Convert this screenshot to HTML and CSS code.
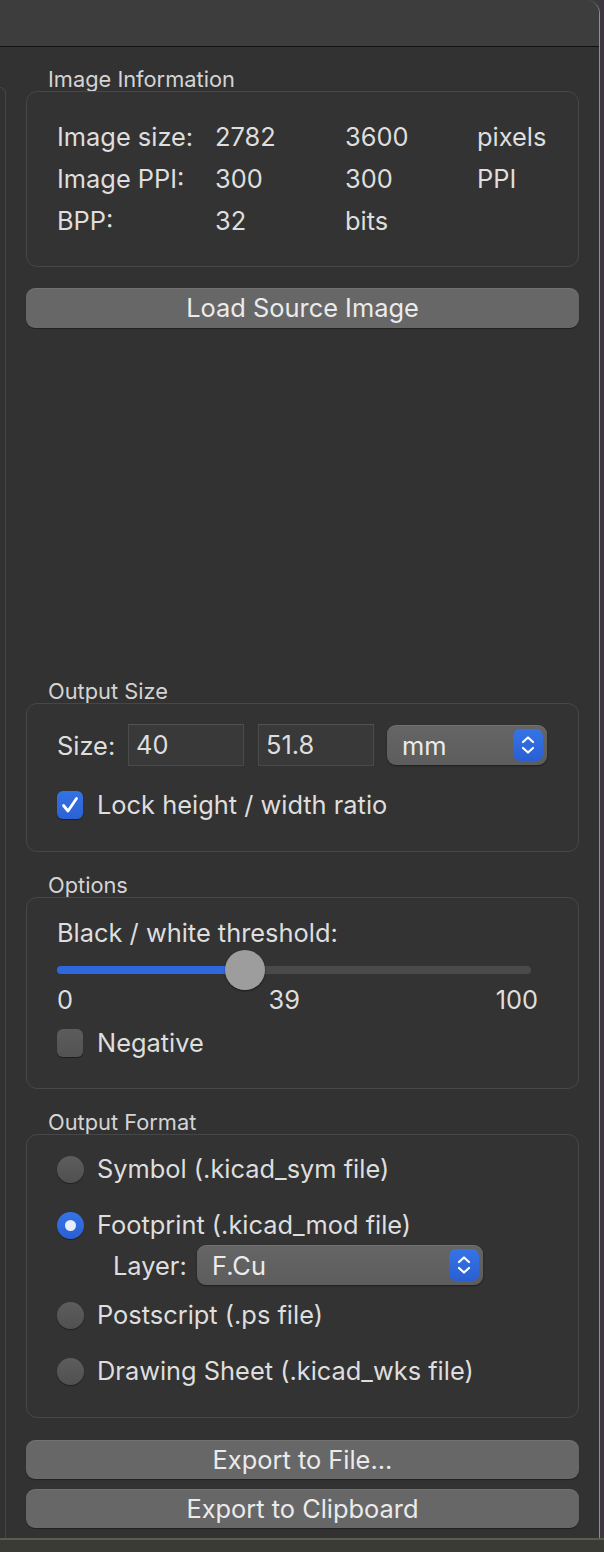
FILE: index.html
```html
<!DOCTYPE html>
<html>
<head>
<meta charset="utf-8">
<link rel="stylesheet" href="styles.css">
</head>
<body>
<div class="screen">
  <div class="row-top">
    <div class="window">
      <div class="titlebar"></div>
      <div class="content">
        <div class="left-stub"></div>
        <div class="panel">
          <div class="group-label">Image Information</div>
          <div class="box info-box">
            <div class="info-grid">
              <span>Image size:</span><span>2782</span><span>3600</span><span>pixels</span>
              <span>Image PPI:</span><span>300</span><span>300</span><span>PPI</span>
              <span>BPP:</span><span>32</span><span>bits</span><span></span>
            </div>
          </div>
          <div class="button load-btn">Load Source Image</div>
          <div class="spacer"></div>

          <div class="group-label">Output Size</div>
          <div class="box size-box">
            <div class="size-row">
              <span class="size-label">Size:</span>
              <div class="field">40</div>
              <div class="field">51.8</div>
              <div class="select unit-select">
                <span class="select-text">mm</span>
                <span class="stepper"><svg width="30" height="32" viewBox="0 0 30 32"><path d="M10 13 L15 8.5 L20 13 M10 19 L15 23.5 L20 19" fill="none" stroke="#fff" stroke-width="2.2" stroke-linecap="round" stroke-linejoin="round"/></svg></span>
              </div>
            </div>
            <div class="check-row lock-row">
              <span class="checkbox checked"><svg width="26" height="28" viewBox="0 0 26 28"><path d="M6.5 14.5 L11 20 L19.5 7.5" fill="none" stroke="#fff" stroke-width="2.8" stroke-linecap="round" stroke-linejoin="round"/></svg></span>
              <span class="check-text">Lock height / width ratio</span>
            </div>
          </div>

          <div class="group-label gl-gap">Options</div>
          <div class="box options-box">
            <div class="threshold-label">Black / white threshold:</div>
            <div class="slider">
              <div class="track"><div class="fill" style="width: 39.6%"></div></div>
              <div class="knob" style="left: 39.6%"></div>
            </div>
            <div class="ticks"><span>0</span><span>39</span><span>100</span></div>
            <div class="check-row negative-row">
              <span class="checkbox"></span>
              <span class="check-text">Negative</span>
            </div>
          </div>

          <div class="group-label gl-gap">Output Format</div>
          <div class="box format-box">
            <div class="radio-row r-symbol"><span class="radio"></span><span class="check-text">Symbol (.kicad_sym file)</span></div>
            <div class="radio-row r-footprint"><span class="radio checked"><span class="dot"></span></span><span class="check-text">Footprint (.kicad_mod file)</span></div>
            <div class="layer-row">
              <span class="layer-label">Layer:</span>
              <div class="select layer-select">
                <span class="select-text">F.Cu</span>
                <span class="stepper"><svg width="30" height="32" viewBox="0 0 30 32"><path d="M10 13 L15 8.5 L20 13 M10 19 L15 23.5 L20 19" fill="none" stroke="#fff" stroke-width="2.2" stroke-linecap="round" stroke-linejoin="round"/></svg></span>
              </div>
            </div>
            <div class="radio-row r-post"><span class="radio"></span><span class="check-text">Postscript (.ps file)</span></div>
            <div class="radio-row r-draw"><span class="radio"></span><span class="check-text">Drawing Sheet (.kicad_wks file)</span></div>
          </div>

          <div class="button export-file">Export to File...</div>
          <div class="button export-clip">Export to Clipboard</div>
        </div>
      </div>
    </div>
    <div class="desk-right"></div>
  </div>
  <div class="desk-bottom"></div>
</div>
</body>
</html>
```
FILE: styles.css
```css
* { box-sizing: border-box; }
html, body { margin: 0; padding: 0; }
body {
  background: #3b3c35;
  font-family: Inter, "Noto Sans", "Liberation Sans", sans-serif;
  color: #dedede;
  width: 604px;
  height: 1552px;
  overflow: hidden;
}
.screen { width: 604px; height: 1552px; display: flex; flex-direction: column; }
.row-top { display: flex; height: 1538px; }
.window {
  width: 600px;
  height: 1538px;
  background: #323232;
  border-top-right-radius: 14px;
  border-right: 1px solid #8a8f99;
  overflow: hidden;
  display: flex;
  flex-direction: column;
}
.desk-right { width: 4px; background: #3f3542; }
.desk-bottom {
  height: 14px;
  background: #3a3b34;
  border-top: 2px solid #5a5c4d;
}
.titlebar {
  height: 47px;
  background: #3d3d3d;
  border-bottom: 1px solid #111;
  flex: none;
}
.content { display: flex; flex: 1; }
.left-stub {
  width: 6px;
  margin-top: 40px;
  border-top: 1px solid #444;
  border-right: 1px solid #444;
  border-top-right-radius: 6px;
  flex: none;
}
.panel {
  width: 553px;
  margin-left: 20px;
  display: flex;
  flex-direction: column;
  font-size: 25.4px;
}
.group-label {
  font-size: 21.8px;
  line-height: 23px;
  height: 23px;
  padding-left: 22px;
  color: #d4d4d4;
  margin-top: 21px;
}
.gl-gap { margin-top: 22px; }
.box {
  border: 1px solid #474747;
  border-radius: 11px;
  background: #333333;
}
.info-box { padding: 24px 0 24px 30px; height: 176px; }
.info-grid {
  display: grid;
  grid-template-columns: 158px 130px 132px auto;
  grid-auto-rows: 42px;
  line-height: 42px;
}
.button {
  height: 40px;
  border-radius: 9px;
  background: #676767;
  color: #ebebeb;
  line-height: 40px;
  text-align: center;
  box-shadow: 0 1px 1px rgba(0,0,0,0.35), inset 0 1px 0 rgba(255,255,255,0.08);
}
.load-btn { margin-top: 21px; }
.spacer { height: 331px; flex: none; }

.size-box { height: 149px; padding: 20px 0 0 30px; }
.size-row { display: flex; align-items: center; height: 42px; }
.size-label { width: 71px; }
.field {
  width: 116px;
  height: 42px;
  background: #393939;
  border: 1px solid #4a4a4a;
  border-top-color: #525252;
  padding-left: 7px;
  line-height: 40px;
  margin-right: 14px;
}
.select {
  height: 40px;
  border-radius: 9px;
  background: linear-gradient(#656565, #5d5d5d);
  box-shadow: 0 1px 2px rgba(0,0,0,0.45), inset 0 1px 0 rgba(255,255,255,0.08);
  display: flex;
  align-items: center;
  justify-content: space-between;
  padding: 0 4px 0 15px;
  color: #ececec;
}
.unit-select { width: 160px; margin-left: -1px; }
.stepper {
  width: 30px;
  height: 32px;
  border-radius: 7px;
  background: linear-gradient(#3574e6, #2a5fd2);
  display: flex;
}
.check-row, .radio-row {
  display: flex;
  align-items: center;
  height: 30px;
}
.lock-row { margin-top: 24px; }
.checkbox {
  width: 26px;
  height: 28px;
  border-radius: 6px;
  background: linear-gradient(#5c5c5c, #535353);
  box-shadow: 0 1px 1px rgba(0,0,0,0.4);
  margin-right: 14px;
  display: flex;
  flex: none;
}
.checkbox.checked { background: linear-gradient(#3572e4, #2b62d6); }
.check-text { line-height: 30px; white-space: nowrap; }

.options-box { height: 192px; padding: 20px 47px 0 30px; }
.threshold-label { line-height: 30px; height: 30px; }
.slider { position: relative; height: 40px; margin-top: 2px; width: 474px; }
.track {
  position: absolute;
  left: 0; right: 0; top: 16px;
  height: 8px;
  border-radius: 4px;
  background: #4a4a4a;
  overflow: hidden;
}
.fill { height: 100%; background: #2f68de; }
.knob {
  position: absolute;
  top: 0;
  width: 40px;
  height: 40px;
  margin-left: -20px;
  border-radius: 50%;
  background: #9d9d9d;
  box-shadow: 0 1px 2px rgba(0,0,0,0.5);
}
.ticks {
  display: flex;
  justify-content: space-between;
  line-height: 24px;
  height: 24px;
  margin-top: -2px;
  width: 481px;
}
.negative-row { margin-top: 16px; }

.format-box { height: 284px; padding: 19px 0 0 30px; }
.radio {
  width: 27px;
  height: 27px;
  border-radius: 50%;
  background: linear-gradient(#5d5d5d, #505050);
  box-shadow: 0 1px 1px rgba(0,0,0,0.4);
  margin-right: 13px;
  display: flex;
  align-items: center;
  justify-content: center;
  flex: none;
}
.radio.checked { background: linear-gradient(#3574e6, #2a5fd2); }
.dot { width: 11px; height: 11px; border-radius: 50%; background: #e6eefc; }
.r-footprint { margin-top: 26px; }
.layer-row {
  display: flex;
  align-items: center;
  height: 40px;
  margin-top: 5px;
  padding-left: 56px;
}
.layer-label { width: 84px; }
.layer-select { width: 286px; }
.r-post { margin-top: 15px; }
.r-draw { margin-top: 26px; }

.export-file { margin-top: 22px; height: 39px; line-height: 39px; }
.export-clip { margin-top: 10px; height: 39px; line-height: 39px; }
```
